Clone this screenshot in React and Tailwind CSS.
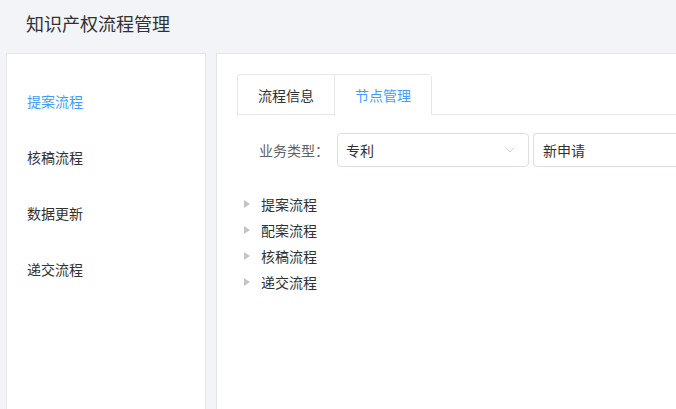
import { ChevronDown } from "lucide-react";

const menu = ["提案流程", "核稿流程", "数据更新", "递交流程"];
const nodes = ["提案流程", "配案流程", "核稿流程", "递交流程"];

export default function App() {
  return (
    <div
      className="w-[676px] h-[409px] overflow-hidden bg-[#f3f4f8] text-[#333]"
      style={{ fontFamily: '"Noto Sans CJK SC", "Noto Sans", sans-serif' }}
    >
      {/* header */}
      <div className="h-[53px] pl-[26px] pt-[10px] text-[18px] leading-[26px] text-[#303133]">
        知识产权流程管理
      </div>

      <div className="flex gap-[10px] pl-[6px] h-[360px]">
        {/* side menu */}
        <div className="w-[200px] shrink-0 bg-white border border-[#e4e6ec] pt-[19px]">
          {menu.map((m, i) => (
            <div
              key={m}
              className={`h-[56px] leading-[56px] pl-[20px] text-[14px] ${
                i === 0 ? "text-[#409eff]" : "text-[#303133]"
              }`}
            >
              {m}
            </div>
          ))}
        </div>

        {/* main */}
        <div className="flex-1 bg-white border border-[#e4e6ec] border-r-0 pl-[20px] pt-[20px]">
          {/* tabs */}
          <div className="flex border-b border-[#e4e7ed] h-[41px]">
            <div className="flex border border-b-0 border-[#e4e7ed] rounded-t-[4px]">
              <div className="w-[96px] h-[40px] leading-[40px] text-center text-[14px] text-[#303133]">
                流程信息
              </div>
              <div className="w-[97px] h-[41px] leading-[40px] text-center text-[14px] text-[#409eff] border-l border-[#e4e7ed] bg-white">
                节点管理
              </div>
            </div>
          </div>

          {/* form */}
          <div className="flex items-center mt-[18px]">
            <div className="w-[100px] pr-[8px] text-right text-[14px] text-[#606266]">
              业务类型：
            </div>
            <div className="w-[192px] h-[34px] border border-[#dcdfe6] rounded-[4px] flex items-center justify-between pl-[8px] pr-[10px] text-[14px] text-[#303133]">
              <span>专利</span>
              <ChevronDown size={16} strokeWidth={1.2} className="text-[#c0c4cc]" />
            </div>
            <div className="flex-1 ml-[4px] h-[34px] border border-r-0 border-[#dcdfe6] rounded-l-[4px] flex items-center pl-[9px] text-[14px] text-[#303133]">
              新申请
            </div>
          </div>

          {/* tree */}
          <div className="mt-[24px]">
            {nodes.map((n) => (
              <div key={n} className="h-[26px] flex items-center text-[14px] text-[#303133]">
                <span className="ml-[7px] mr-[11px] w-0 h-0 border-y-[4px] border-y-transparent border-l-[6px] border-l-[#c0c4cc]" />
                {n}
              </div>
            ))}
          </div>
        </div>
      </div>
    </div>
  );
}
